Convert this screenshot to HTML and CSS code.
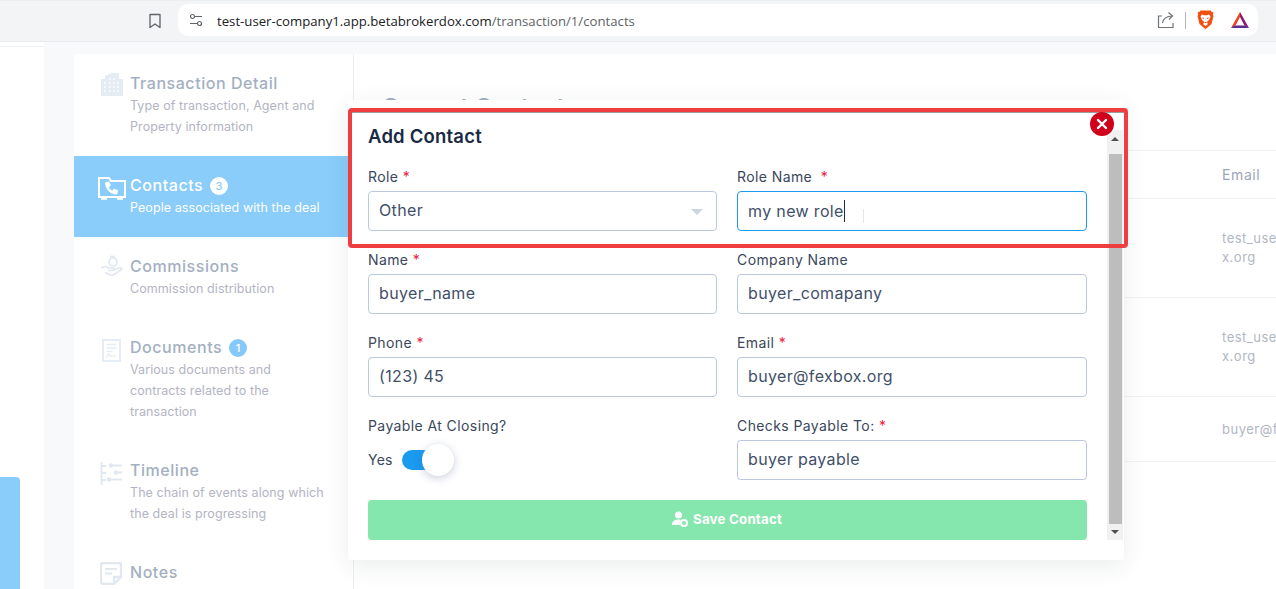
FILE: index.html
```html
<!DOCTYPE html>
<html lang="en">
<head>
<meta charset="utf-8">
<title>Add Contact</title>
<link rel="stylesheet" href="styles.css">
</head>
<body>
<header class="toolbar">
  <svg class="bookmark" width="14" height="16" viewBox="0 0 14 16"><path d="M2 1.500h10v13L7 11l-5 3.500z" fill="none" stroke="#5f6368" stroke-width="1.300" stroke-linejoin="round"/></svg>
  <div class="omnibox">
    <svg class="tune" width="14" height="14" viewBox="0 0 14 14" fill="none" stroke="#5f6368" stroke-width="1.200"><circle cx="3.500" cy="3.500" r="2"/><path d="M5.500 3.500H13M1 10.500h7.500"/><circle cx="10.500" cy="10.500" r="2"/></svg>
    <div class="url">test-user-company1.app.betabrokerdox.com<span class="url-path">/transaction/1/contacts</span></div>
    <svg class="share" width="18" height="18" viewBox="0 0 18 18" fill="none" stroke="#6f7479" stroke-width="1.200"><path d="M5 5H1.500v11.500H16V12"/><path d="M5.500 12c.5-4 3-6.500 9-7"/><path d="M11.500 1.500L15.500 5l-3.500 3.500"/></svg>
    <span class="sep"></span>
    <svg class="brave" width="17" height="20" viewBox="0 0 17 20"><path d="M3.500 .5h10l1 1.300 2 .7-.7 2 .7 1.500-2 8-4 3.500-2 1.500-2-1.500-4-3.500-2-8 .7-1.500-.7-2 2-.7z" fill="#f1500f"/><path d="M5 4.500l2 .7h3l2-.7 1.500 2-1.500 3.500-1.500 1-.5 2 1 1-2.500 2-2.500-2 1-1-.5-2-1.500-1L3.500 6.500z" fill="#fff"/><path d="M7 8.500l-1.500-.5M10 8.500l1.500-.5M7.500 12.500h2" stroke="#f1500f" stroke-width="1"/></svg>
    <svg class="bat" width="18" height="17" viewBox="0 0 18 17"><path d="M9 0L0 16l5-3 4-8z" fill="#f1401f"/><path d="M9 0l9 16-5-3-4-8z" fill="#8a1b6e"/><path d="M0 16h18l-3.500-2.500h-11z" fill="#5f2d91"/><path d="M9 5.500L5 13h8z" fill="#fff"/></svg>
  </div>
</header>
<div class="page">
  <aside class="rail">
    <div class="rail-line"></div>
    <div class="rail-block"></div>
  </aside>
  <div class="card">
    <nav class="steps">
      <div class="step">
        <svg class="step-icon" width="24" height="24" viewBox="0 0 24 24"><path d="M1 6h4V3l7-3h7v6h4v17H1z" fill="#e6ecf3"/><path d="M9 5h1.500v2H9zm4 0h1.500v2H13zM9 9h1.500v2H9zm4 0h1.500v2H13zm4 0h1.500v2H17zM4 9h1.500v2H4zm5 4h1.500v2H9zm4 0h1.500v2H13zm4 0h1.500v2H17zM4 13h1.500v2H4zm5 4h1.500v2H9zm4 0h1.500v2H13zm4 0h1.500v2H17zM4 17h1.500v2H4z" fill="#fbfcfd"/></svg>
        <div class="step-title">Transaction Detail</div>
        <div class="step-sub">Type of transaction, Agent and<br>Property information</div>
      </div>
      <div class="step step-active">
        <svg class="step-icon" width="28" height="24" viewBox="0 0 28 24" fill="none" stroke="#fff" stroke-width="2"><path d="M1 21V2h10l2 3h14v16z"/><path d="M3 22.500h6M19 22.500h6" stroke-width="2.500"/><path d="M7.500 6.500l3.500-.8 1.500 4-2 1.300c.7 2 2 3.300 4 4l1.300-2 4 1.500-.8 3.500c-6 1.200-12-5.500-11.500-11.500z" fill="#fff" stroke-width=".6"/></svg>
        <div class="step-title">Contacts <span class="badge badge-white">3</span></div>
        <div class="step-sub">People associated with the deal</div>
      </div>
      <div class="step">
        <svg class="step-icon icon-hand" width="23" height="23" viewBox="0 0 23 23" fill="none" stroke="#e2e8f0" stroke-width="1.700"><circle cx="13" cy="7" r="4"/><path d="M10 1.500h5"/><path d="M1 13c3-2 6-1.500 8 0h4c1.500 0 1.500 2 0 2.500H8M13 15l7-2c2-.5 2.500 1 1 2l-8 5c-3 1-5-1-8-2.500"/></svg>
        <div class="step-title">Commissions</div>
        <div class="step-sub">Commission distribution</div>
      </div>
      <div class="step step-docs">
        <svg class="step-icon" width="19" height="23" viewBox="0 0 19 23" fill="none" stroke="#e6ecf3" stroke-width="2"><path d="M1 1h17v21H1z"/><path d="M4.500 5.500h10M4.500 9h10M4.500 12.500h6M4 18c2-1 2-4 3-3s0 3 2 2 1 1 5 0" stroke-width="1.400"/></svg>
        <div class="step-title">Documents <span class="badge badge-blue">1</span></div>
        <div class="step-sub">Various documents and<br>contracts related to the<br>transaction</div>
      </div>
      <div class="step">
        <svg class="step-icon icon-time" width="23" height="23" viewBox="0 0 23 23" fill="none" stroke="#e2e8f0" stroke-width="2"><path d="M1.500 0v23"/><path d="M1.500 4H6M1.500 11H6M1.500 18H6" /><path d="M11 3.500h11M17 10.500h5M10 17.500h12"/><circle cx="11" cy="3.500" r="1.300" fill="#e2e8f0"/><circle cx="16" cy="10.500" r="1.300" fill="#e2e8f0"/><circle cx="9" cy="17.500" r="1.300" fill="#e2e8f0"/></svg>
        <div class="step-title">Timeline</div>
        <div class="step-sub">The chain of events along which<br>the deal is progressing</div>
      </div>
      <div class="step">
        <svg class="step-icon icon-notes" width="22" height="23" viewBox="0 0 22 23" fill="none" stroke="#e2e8f0" stroke-width="2.400"><path d="M14 22H3a2 2 0 0 1-2-2V3a2 2 0 0 1 2-2h16a2 2 0 0 1 2 2v12z"/><path d="M14 22v-7h7" /><path d="M5 7h12M5 11.500h7" stroke-width="2"/></svg>
        <div class="step-title">Notes</div>
      </div>
    </nav>
    <main class="content">
      <h1 class="content-title">Current Contacts</h1>
      <div class="row row-head"><div class="cell cell-head">Email</div></div>
      <div class="row row-tall"><div class="cell">test_user@fexbo<br>x.org</div></div>
      <div class="row row-tall"><div class="cell">test_user@fexbo<br>x.org</div></div>
      <div class="row row-short"><div class="cell">buyer@fexbox.org</div></div>
    </main>
  </div>
</div>

<section class="modal">
  <div class="modal-body">
    <h2 class="modal-title">Add Contact</h2>
    <div class="form-grid">
      <div class="field">
        <div class="label">Role <em class="req">*</em></div>
        <div class="input input-select">Other<span class="caret-down"></span></div>
      </div>
      <div class="field">
        <div class="label">Role Name &nbsp;<em class="req">*</em></div>
        <div class="input input-focus"><span class="typed">my new role</span><span class="ibeam"></span></div>
      </div>
      <div class="field">
        <div class="label">Name <em class="req">*</em></div>
        <div class="input">buyer_name</div>
      </div>
      <div class="field">
        <div class="label">Company Name</div>
        <div class="input">buyer_comapany</div>
      </div>
      <div class="field">
        <div class="label">Phone <em class="req">*</em></div>
        <div class="input">(123) 45</div>
      </div>
      <div class="field">
        <div class="label">Email <em class="req">*</em></div>
        <div class="input">buyer@fexbox.org</div>
      </div>
      <div class="field">
        <div class="label">Payable At Closing?</div>
        <div class="toggle-row">
          <span class="toggle-text">Yes</span>
          <span class="toggle"><span class="knob"></span></span>
        </div>
      </div>
      <div class="field">
        <div class="label">Checks Payable To: <em class="req">*</em></div>
        <div class="input">buyer payable</div>
      </div>
    </div>
    <div class="save">
      <svg width="16" height="16" viewBox="0 0 16 16"><circle cx="6.500" cy="4" r="3.500" fill="#fff"/><path d="M0 14c0-4 3-5.500 6.500-5.500 1 0 2 .2 2.500.5-1.500 1.500-1.500 3.500-.5 5z" fill="#fff"/><circle cx="12" cy="12" r="3" fill="none" stroke="#fff" stroke-width="2"/></svg>
      <span>Save Contact</span>
    </div>
  </div>
  <div class="scrollbar">
    <span class="arrow-up"></span>
    <span class="thumb"></span>
    <span class="arrow-down"></span>
  </div>
</section>
<div class="annotation"></div>
<div class="close">
  <svg width="12" height="12" viewBox="0 0 12 12"><path d="M2 2l8 8M10 2l-8 8" stroke="#fff" stroke-width="2.400" stroke-linecap="round"/></svg>
</div>
</body>
</html>
```
FILE: styles.css
```css
* { box-sizing: border-box; }
html, body { margin: 0; height: 589px; overflow: hidden; }
body {
  position: relative;
  width: 1276px;
  background: #f8f9fb;
  font-family: "Inter", "Liberation Sans", sans-serif;
  display: flex;
  flex-direction: column;
}
.toolbar {
  height: 42px;
  flex: none;
  display: flex;
  align-items: center;
  background: #f3f4f6;
  border-top: 1px solid #eceef0;
  border-bottom: 1px solid #e8eaed;
  padding: 0 18px 2px 148px;
}
.bookmark { flex: none; margin-top: 1px; }
.omnibox {
  margin-left: 16px;
  flex: 1;
  height: 32px;
  background: #fff;
  border-radius: 10px;
  display: flex;
  align-items: center;
  padding-left: 11px;
}
.tune { flex: none; }
.url {
  margin-left: 14px;
  flex: 1;
  font-family: "Open Sans", sans-serif;
  font-size: 13.2px;
  line-height: 20px;
  padding-top: 1px;
  color: #202124;
  white-space: nowrap;
}
.url-path { color: #5f6368; }
.share { flex: none; margin-right: -1px; }
.sep { width: 1px; height: 17px; background: #b4b7bb; margin-left: 11px; flex: none; }
.brave { margin-left: 11px; flex: none; }
.bat { margin-left: 17px; margin-right: 9px; flex: none; }

.page { flex: 1; display: flex; min-height: 0; }
.rail {
  width: 44px;
  flex: none;
  background: #fff;
  display: flex;
  flex-direction: column;
  padding-top: 4px;
}
.rail-line { height: 1px; background: #eef0f2; }
.rail-block {
  width: 20px;
  height: 112px;
  margin-top: auto;
  background: #8accfa;
  border-top-right-radius: 4px;
}
.card {
  margin: 12px 0 0 30px;
  flex: 1;
  display: flex;
  background: #fff;
  border-radius: 4px 0 0 0;
  min-width: 0;
}
.steps {
  width: 280px;
  flex: none;
  border-right: 1px solid #eceef2;
}
.step {
  position: relative;
  padding: 18px 0 19px 56px;
  color: #a3afc2;
}
.step-icon { position: absolute; left: 26px; top: 19px; }
.step-active .step-icon { left: 24px; top: 20px; }
.step-docs .step-icon { left: 28px; top: 21px; }
.icon-hand { top: 18px; }
.icon-time { top: 21px; }
.step-title {
  font-size: 16px;
  font-weight: 500;
  line-height: 23px;
  letter-spacing: .55px;
  white-space: nowrap;
}
.step-sub {
  font-size: 12.5px;
  line-height: 21px;
  letter-spacing: .08px;
  color: #b3b4c3;
  white-space: nowrap;
}
.step-active { background: #8accfa; color: #fff; }
.step-active .step-sub { color: #fff; }
.badge {
  display: inline-block;
  width: 18px;
  height: 18px;
  border-radius: 50%;
  font-size: 11px;
  line-height: 18px;
  letter-spacing: 0;
  text-align: center;
  vertical-align: 1px;
  margin-left: 2px;
}
.badge-white { background: #fff; color: #8accfa; }
.badge-blue { background: #85c9fb; color: #fff; }

.content { flex: 1; min-width: 0; overflow: hidden; }
.content-title {
  margin: 0;
  height: 96px;
  padding: 37px 0 0 28px;
  font-size: 23px;
  font-weight: 600;
  line-height: 32px;
  color: #a3afc2;
  letter-spacing: .3px;
}
.row {
  border-top: 1px solid #f1f3f5;
  display: flex;
  align-items: center;
  justify-content: flex-end;
}
.row-head { height: 48px; }
.row-tall { height: 99px; }
.row-short { height: 66px; border-bottom: 1px solid #f1f3f5; }
.cell {
  width: 54px;
  flex: none;
  font-size: 13px;
  line-height: 19px;
  letter-spacing: .5px;
  color: #b1b6c4;
  white-space: nowrap;
  overflow: hidden;
}
.cell-head { font-size: 14px; color: #9aa5b8; letter-spacing: .6px; }

.modal {
  position: absolute;
  left: 348px;
  top: 100px;
  width: 776px;
  height: 460px;
  background: #fff;
  border-radius: 3px;
  box-shadow: 0 6px 24px rgba(30, 40, 60, .09);
  display: flex;
}
.modal-body { flex: 1; padding: 24px 20px 20px; min-width: 0; }
.modal-title {
  margin: 0 0 19px;
  height: 24px;
  font-size: 18.5px;
  font-weight: 600;
  line-height: 24px;
  color: #1a2a44;
  letter-spacing: .2px;
}
.form-grid {
  display: grid;
  grid-template-columns: 349px 350px;
  column-gap: 20px;
  row-gap: 19px;
}
.label {
  height: 19px;
  margin-bottom: 5px;
  font-size: 14px;
  font-weight: 400;
  line-height: 19px;
  letter-spacing: .4px;
  color: #3a475c;
  white-space: nowrap;
}
.req { color: #e5233f; font-style: normal; }
.input {
  position: relative;
  height: 40px;
  border: 1px solid #bcc9dc;
  border-radius: 4px;
  padding: 0 10px;
  font-size: 16px;
  line-height: 37px;
  color: #3f5069;
  letter-spacing: .35px;
  white-space: nowrap;
}
.input-focus { border-color: #1a9bf0; }
.typed {
  display: inline-block;
  vertical-align: top;
  margin-top: 8px;
  line-height: 22px;
  border-right: 1px solid #1c2a44;
}
.ibeam {
  position: absolute;
  left: 125px;
  top: 17px;
  width: 1px;
  height: 14px;
  background: #e4e6ea;
}
.caret-down {
  position: absolute;
  right: 13px;
  top: 17px;
  border-left: 6px solid transparent;
  border-right: 6px solid transparent;
  border-top: 6px solid #cbd5e2;
}
.toggle-row {
  height: 40px;
  display: flex;
  align-items: center;
  gap: 10px;
}
.toggle-text { font-size: 14px; letter-spacing: .2px; color: #3a475c; width: 24px; margin-top: -2px; }
.toggle {
  position: relative;
  width: 34px;
  height: 20px;
  border-radius: 10px;
  background: linear-gradient(90deg, #1a9bf0 55%, #7cc6f7);
}
.knob {
  position: absolute;
  left: 20px;
  top: -6px;
  width: 32px;
  height: 32px;
  border-radius: 50%;
  background: #fff;
  box-shadow: 0 2px 8px rgba(40, 60, 110, .25);
}
.save {
  margin-top: 20px;
  height: 40px;
  border-radius: 4px;
  background: #85e6ae;
  display: flex;
  align-items: center;
  justify-content: center;
  gap: 5px;
  color: #fff;
  font-size: 13.3px;
  font-weight: 700;
  letter-spacing: .2px;
  padding: 0 1px 2px 0;
}
.scrollbar {
  flex: none;
  width: 16px;
  margin: 30px 1px 20px 0;
  background: #f1f1f1;
  display: flex;
  flex-direction: column;
  align-items: center;
}
.arrow-up, .arrow-down {
  flex: none;
  width: 0;
  border-left: 4px solid transparent;
  border-right: 4px solid transparent;
}
.arrow-up { border-bottom: 4px solid #505050; margin: 7px 0 13px; }
.arrow-down { border-top: 4px solid #505050; margin: 6px 0 6px; }
.thumb { flex: 1; width: 13px; background: #bdbdbd; }

.annotation {
  position: absolute;
  left: 348px;
  top: 108px;
  width: 780px;
  height: 140px;
  border: 4px solid #ef3e42;
  border-radius: 4px;
  box-shadow: inset 0 1px 0 #9c9c9c;
}
.close {
  position: absolute;
  left: 1090px;
  top: 112px;
  width: 24px;
  height: 24px;
  border-radius: 50%;
  background: #d0021b;
  display: flex;
  align-items: center;
  justify-content: center;
}
```
